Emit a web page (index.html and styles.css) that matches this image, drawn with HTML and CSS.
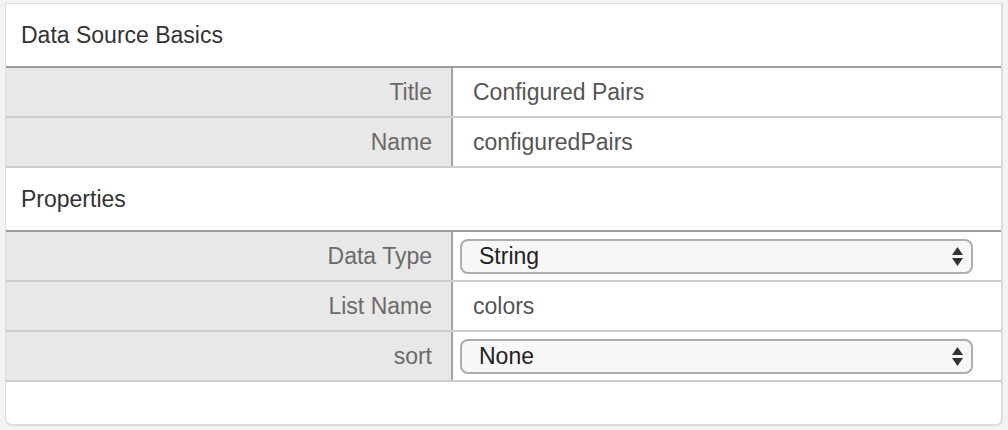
FILE: index.html
```html
<!DOCTYPE html>
<html>
<head>
<meta charset="utf-8">
<link rel="stylesheet" href="styles.css">
</head>
<body>
<div class="panel">
  <div class="section-head">Data Source Basics</div>
  <div class="row">
    <div class="label">Title</div>
    <div class="value">Configured Pairs</div>
  </div>
  <div class="row">
    <div class="label">Name</div>
    <div class="value">configuredPairs</div>
  </div>
  <div class="section-head">Properties</div>
  <div class="row">
    <div class="label">Data Type</div>
    <div class="value value-select">
      <div class="select"><span>String</span>
        <svg class="arrows" width="11" height="19" viewBox="0 0 11 19"><path d="M5.5 0 L11 8 L0 8 Z M0 11 L11 11 L5.5 19 Z" fill="#333"/></svg>
      </div>
    </div>
  </div>
  <div class="row">
    <div class="label">List Name</div>
    <div class="value">colors</div>
  </div>
  <div class="row">
    <div class="label">sort</div>
    <div class="value value-select">
      <div class="select"><span>None</span>
        <svg class="arrows" width="11" height="19" viewBox="0 0 11 19"><path d="M5.5 0 L11 8 L0 8 Z M0 11 L11 11 L5.5 19 Z" fill="#333"/></svg>
      </div>
    </div>
  </div>
  <div class="footer"></div>
</div>
</body>
</html>
```

FILE: styles.css
```css
html, body {
  margin: 0;
  padding: 0;
  background: #f3f3f3;
}
body {
  padding: 3px 5px 0 5px;
  font-family: "Liberation Sans", Arial, Helvetica, sans-serif;
  font-size: 23px;
}
.panel {
  background: #fff;
  border: 1px solid #dcdcdc;
  border-width: 1px 2px 2px 1px;
  border-radius: 0 0 7px 7px;
  box-sizing: border-box;
}
.section-head {
  height: 62px;
  display: flex;
  align-items: center;
  padding-left: 15px;
  color: #333;
  border-bottom: 2px solid #9c9c9c;
}
.row {
  display: flex;
  height: 50px;
  box-sizing: border-box;
  border-bottom: 2px solid #cdcdcd;
}
.label {
  width: 447px;
  flex: none;
  background: #e8e8e8;
  border-right: 2px solid #a4a4a4;
  display: flex;
  align-items: center;
  justify-content: flex-end;
  padding-right: 19px;
  box-sizing: border-box;
  color: #6a6a6a;
}
.value {
  flex: 1;
  display: flex;
  align-items: center;
  padding-left: 20px;
  color: #555;
}
.value-select {
  padding: 0 28px 0 7px;
}
.select {
  flex: 1;
  height: 35px;
  box-sizing: border-box;
  border: 2px solid #adadad;
  border-radius: 8px;
  background: #f7f7f7;
  display: flex;
  align-items: center;
  justify-content: space-between;
  padding: 0 8px 0 17px;
  color: #222;
}
.arrows {
  display: block;
}
.footer {
  height: 42px;
}
```
